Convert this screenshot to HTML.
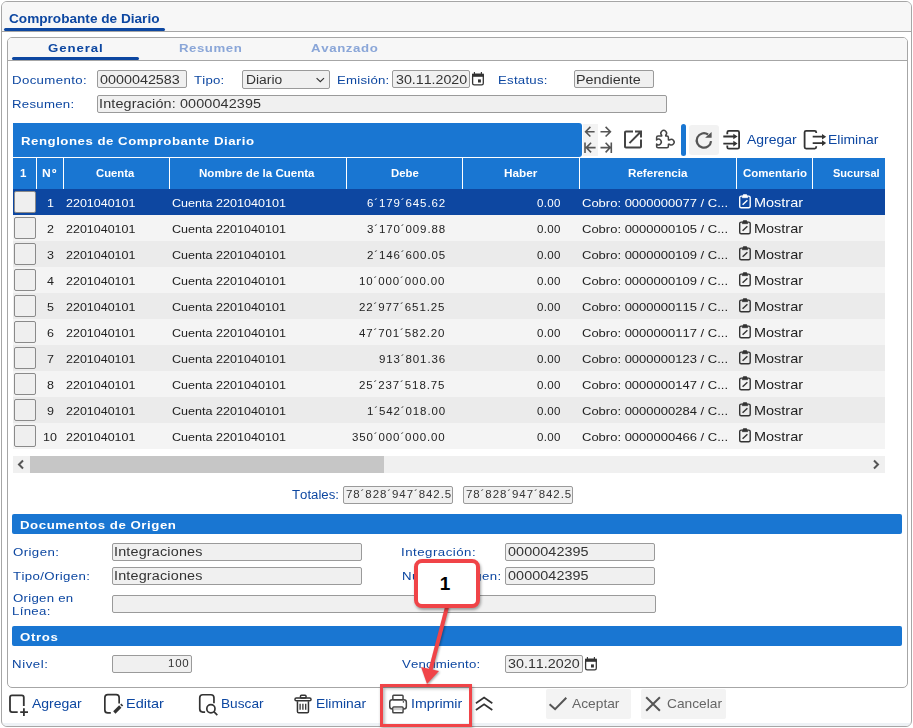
<!DOCTYPE html><html><head><meta charset="utf-8"><style>
html,body{margin:0;padding:0;background:#fff;width:913px;height:728px;overflow:hidden;position:relative}
div,svg{position:absolute}
.t{white-space:pre;transform-origin:0 0;line-height:0;font-family:"Liberation Sans",sans-serif;font-kerning:none}
</style></head><body>
<div style="left:1px;top:1px;width:911px;height:726px;border:1px solid #a6a6a6;border-radius:6px;background:#fff;box-sizing:border-box;overflow:hidden"><div style="left:0;top:0;width:909px;height:29px;background:#f7f7f7;border-bottom:1px solid #a6a6a6"></div><div style="left:0;top:721px;width:909px;height:3px;background:#eef2f6"></div></div>
<div class="t" style="left:8.74px;top:19.00px;font-size:13px;font-weight:bold;color:#0d47a1;letter-spacing:0.000px;transform:scaleX(1.047);">Comprobante de Diario</div>
<div style="left:4px;top:28px;width:161px;height:3px;background:#0d47a1;border-radius:2px"></div>
<div style="left:7px;top:37px;width:901px;height:651px;border:1px solid #a6a6a6;border-radius:5px;background:#fff;box-sizing:border-box;overflow:hidden"><div style="left:0;top:0;width:899px;height:22px;background:#f7f7f7;border-bottom:1px solid #a6a6a6"></div></div>
<div class="t" style="left:48.06px;top:48.00px;font-size:11.5px;font-weight:bold;color:#0d47a1;letter-spacing:0.801px;transform:scaleX(1.150);">General</div>
<div style="left:12px;top:57px;width:127px;height:3px;background:#0d47a1;border-radius:2px"></div>
<div class="t" style="left:178.72px;top:48.00px;font-size:11.5px;font-weight:bold;color:#8aa6d8;letter-spacing:0.460px;transform:scaleX(1.150);">Resumen</div>
<div class="t" style="left:311.37px;top:48.00px;font-size:11.5px;font-weight:bold;color:#8aa6d8;letter-spacing:0.544px;transform:scaleX(1.150);">Avanzado</div>
<div class="t" style="left:12.42px;top:80.00px;font-size:11.5px;font-weight:normal;color:#0d47a1;letter-spacing:0.318px;transform:scaleX(1.150);">Documento:</div>
<div style="left:97px;top:70px;width:90px;height:18px;border:1px solid #9a9a9a;border-radius:2px;background:#f0f0f0;box-sizing:border-box"></div>
<div class="t" style="left:100.14px;top:80.00px;font-size:12.5px;font-weight:normal;color:#333;letter-spacing:0.000px;transform:scaleX(1.148);">0000042583</div>
<div class="t" style="left:194.30px;top:80.00px;font-size:11.5px;font-weight:normal;color:#0d47a1;letter-spacing:0.175px;transform:scaleX(1.150);">Tipo:</div>
<div style="left:242px;top:70px;width:88px;height:19px;border:1px solid #9a9a9a;border-radius:2px;background:#f0f0f0;box-sizing:border-box"></div>
<div class="t" style="left:246.36px;top:80.00px;font-size:12.5px;font-weight:normal;color:#333;letter-spacing:0.000px;transform:scaleX(1.109);">Diario</div>
<svg style="left:314px;top:75px" width="13" height="9" viewBox="314 75 13 9" fill="none" stroke="#333" stroke-width="1.2"><path d="M316.6 78.1L320.3 81.7 324 78.1"/></svg>
<div class="t" style="left:337.22px;top:80.00px;font-size:11.5px;font-weight:normal;color:#0d47a1;letter-spacing:0.196px;transform:scaleX(1.150);">Emisión:</div>
<div style="left:392px;top:70px;width:78px;height:18px;border:1px solid #9a9a9a;border-radius:2px;background:#f0f0f0;box-sizing:border-box"></div>
<div class="t" style="left:395.66px;top:80.00px;font-size:12.5px;font-weight:normal;color:#333;letter-spacing:-0.000px;transform:scaleX(1.138);">30.11.2020</div>
<svg style="left:471px;top:71px" width="15" height="16" viewBox="471 71 15 16" fill="none" stroke="#333" stroke-width="1.8"><rect x="472.6" y="74.3" width="10.7" height="10.5" rx="1.6" stroke-width="1.3"/><rect x="472" y="73.7" width="11.9" height="3.1" fill="#333" stroke="none"/><path d="M474.4 72v2.5M481.4 72v2.5" stroke-width="1.1"/><rect x="478" y="79.4" width="2.9" height="3.1" fill="#333" stroke="none"/></svg>
<div class="t" style="left:497.62px;top:80.00px;font-size:11.5px;font-weight:normal;color:#0d47a1;letter-spacing:0.213px;transform:scaleX(1.150);">Estatus:</div>
<div style="left:574px;top:70px;width:80px;height:18px;border:1px solid #9a9a9a;border-radius:2px;background:#f0f0f0;box-sizing:border-box"></div>
<div class="t" style="left:576.32px;top:80.00px;font-size:12.5px;font-weight:normal;color:#333;letter-spacing:0.008px;transform:scaleX(1.150);">Pendiente</div>
<div class="t" style="left:12.42px;top:104.00px;font-size:11.5px;font-weight:normal;color:#0d47a1;letter-spacing:0.226px;transform:scaleX(1.150);">Resumen:</div>
<div style="left:97px;top:95px;width:570px;height:18px;border:1px solid #9a9a9a;border-radius:2px;background:#f0f0f0;box-sizing:border-box"></div>
<div class="t" style="left:99.07px;top:104.00px;font-size:12.5px;font-weight:normal;color:#333;letter-spacing:0.121px;transform:scaleX(1.150);">Integración: 0000042395</div>
<div style="left:13px;top:123px;width:569px;height:34px;background:#1976d2;border-radius:0 3px 3px 0"></div>
<div class="t" style="left:20.92px;top:141.00px;font-size:11.5px;font-weight:bold;color:#fff;letter-spacing:0.449px;transform:scaleX(1.150);">Renglones de Comprobante Diario</div>
<div style="left:583px;top:124px;width:15px;height:32px;background:#f3f3f3"></div>
<svg style="left:580px;top:122px" width="36" height="36" viewBox="580 122 36 36" fill="none" stroke="#555" stroke-width="1.6"><path d="M594.6 131.7H585.6M590.4 126.9L585.6 131.7 590.4 136.5"/><path d="M600.5 131.7H610.4M605.6 126.9L610.4 131.7 605.6 136.5"/><path d="M585 142.4V152.9M595.6 147.6H586.2M591.1 142.8L586.3 147.6 591.1 152.4"/><path d="M611.3 142.4V152.9M600.5 147.6H610.1M605.6 142.8L610.2 147.6 605.6 152.4"/></svg>
<svg style="left:620px;top:126px" width="26" height="26" viewBox="620 126 26 26" fill="#444" stroke="none"><path transform="translate(621 127.6)" d="M19 19H5V5h7V3H5c-1.11 0-2 .9-2 2v14c0 1.1.89 2 2 2h14c1.1 0 2-.9 2-2v-7h-2v7zM14 3v2h3.59l-9.83 9.83 1.41 1.41L19 6.41V10h2V3h-7z"/></svg>
<svg style="left:650px;top:125px" width="30" height="28" viewBox="650 125 30 28" fill="none" stroke="#444" stroke-width="1.5" stroke-linejoin="round"><path d="M656.6 139.9V137.5Q656.6 136 658.1 136H661.7V135.2A2.8 2.8 0 1 1 665.7 135.2V136H666.9Q668.4 136 668.4 137.5V139.9H669.6A2.8 2.8 0 1 1 669.6 144.3H668.4V146.2Q668.4 147.7 666.9 147.7H658.1Q656.6 147.7 656.6 146.2V144.1A2.8 2.8 0 1 0 656.6 139.9Z"/></svg>
<div style="left:681px;top:124px;width:5px;height:32px;background:#1976d2;border-radius:3px"></div>
<div style="left:689px;top:125px;width:30px;height:30px;background:#f2f2f2;border-radius:3px"></div>
<svg style="left:690px;top:126px" width="28" height="28" viewBox="690 126 28 28" ><path d="M708.03 134.5A7.2 7.2 0 1 0 711.07 141.03" fill="none" stroke="#555" stroke-width="2.2"/><path d="M711.6 132.1V137.7H705.1Z" fill="#555"/></svg>
<svg style="left:720px;top:126px" width="24" height="28" viewBox="720 126 24 28" fill="none" stroke="#333" stroke-width="1.8"><path d="M727.3 134.2V132.4Q727.3 130.9 728.8 130.9H737.6Q739.1 130.9 739.1 132.4V147.2Q739.1 148.7 737.6 148.7H728.8Q727.3 148.7 727.3 147.2V145.4"/><path d="M723.3 136.5H734M723.3 143.6H734"/><path d="M733.3 133.7L737.6 136.5 733.3 139.3ZM733.3 140.8L737.6 143.6 733.3 146.4Z" fill="#333" stroke="none"/></svg>
<div class="t" style="left:747.47px;top:140.00px;font-size:13px;font-weight:normal;color:#0d47a1;letter-spacing:0.000px;transform:scaleX(1.074);">Agregar</div>
<svg style="left:800px;top:126px" width="30" height="28" viewBox="800 126 30 28" fill="none" stroke="#333" stroke-width="1.8"><path d="M816.2 132.9V132.3Q816.2 130.8 814.7 130.8H806.1Q804.6 130.8 804.6 132.3V147.1Q804.6 148.6 806.1 148.6H814.7Q816.2 148.6 816.2 147.1V146.3"/><path d="M812.7 136.7H823M812.7 143.1H823"/><path d="M822 133.9L826.2 136.7 822 139.5ZM822 140.3L826.2 143.1 822 145.9Z" fill="#333" stroke="none"/></svg>
<div class="t" style="left:828.26px;top:140.00px;font-size:13px;font-weight:normal;color:#0d47a1;letter-spacing:-0.000px;transform:scaleX(1.071);">Eliminar</div>
<div style="left:13px;top:158px;width:872px;height:31px;background:#1976d2"></div>
<div style="left:36px;top:158px;width:1px;height:31px;background:#fff"></div>
<div style="left:63px;top:158px;width:1px;height:31px;background:#fff"></div>
<div style="left:169px;top:158px;width:1px;height:31px;background:#fff"></div>
<div style="left:346px;top:158px;width:1px;height:31px;background:#fff"></div>
<div style="left:462px;top:158px;width:1px;height:31px;background:#fff"></div>
<div style="left:579px;top:158px;width:1px;height:31px;background:#fff"></div>
<div style="left:736px;top:158px;width:1px;height:31px;background:#fff"></div>
<div style="left:812px;top:158px;width:1px;height:31px;background:#fff"></div>
<div class="t" style="left:19.87px;top:173.00px;font-size:10.5px;font-weight:bold;color:#fff;letter-spacing:0.000px;transform:scaleX(1.100);">1</div>
<div class="t" style="left:42.39px;top:173.00px;font-size:10.5px;font-weight:bold;color:#fff;letter-spacing:1.116px;transform:scaleX(1.150);">Nº</div>
<div class="t" style="left:96.44px;top:173.00px;font-size:10.5px;font-weight:bold;color:#fff;letter-spacing:0.000px;transform:scaleX(1.073);">Cuenta</div>
<div class="t" style="left:199.43px;top:173.00px;font-size:10.5px;font-weight:bold;color:#fff;letter-spacing:0.000px;transform:scaleX(1.100);">Nombre de la Cuenta</div>
<div class="t" style="left:390.64px;top:173.00px;font-size:10.5px;font-weight:bold;color:#fff;letter-spacing:0.000px;transform:scaleX(1.081);">Debe</div>
<div class="t" style="left:504.01px;top:173.00px;font-size:10.5px;font-weight:bold;color:#fff;letter-spacing:0.000px;transform:scaleX(1.121);">Haber</div>
<div class="t" style="left:627.72px;top:173.00px;font-size:10.5px;font-weight:bold;color:#fff;letter-spacing:0.000px;transform:scaleX(1.108);">Referencia</div>
<div class="t" style="left:742.53px;top:173.00px;font-size:10.5px;font-weight:bold;color:#fff;letter-spacing:0.000px;transform:scaleX(1.096);">Comentario</div>
<div class="t" style="left:832.68px;top:173.00px;font-size:10.5px;font-weight:bold;color:#fff;letter-spacing:0.000px;transform:scaleX(1.051);">Sucursal</div>
<div style="left:13px;top:189px;width:872px;height:26px;background:#0d47a1"></div>
<div style="left:14px;top:191px;width:22px;height:22px;border:1px solid #8a8a8a;border-radius:2px;background:#efefef;box-sizing:border-box"></div>
<div class="t" style="left:46.91px;top:203.00px;font-size:11.3px;font-weight:normal;color:#fff;letter-spacing:0.000px;transform:scaleX(1.105);">1</div>
<div class="t" style="left:65.87px;top:203.00px;font-size:11.3px;font-weight:normal;color:#fff;letter-spacing:0.000px;transform:scaleX(1.105);">2201040101</div>
<div class="t" style="left:172.36px;top:203.00px;font-size:11.3px;font-weight:normal;color:#fff;letter-spacing:0.000px;transform:scaleX(1.113);">Cuenta 2201040101</div>
<div class="t" style="left:366.74px;top:204.00px;font-size:10px;font-weight:normal;color:#fff;letter-spacing:0.769px;transform:scaleX(1.150);">6´179´645.62</div>
<div class="t" style="left:537.15px;top:204.00px;font-size:10px;font-weight:normal;color:#fff;letter-spacing:0.324px;transform:scaleX(1.150);">0.00</div>
<div class="t" style="left:581.74px;top:203.00px;font-size:11.3px;font-weight:normal;color:#fff;letter-spacing:0.004px;transform:scaleX(1.150);">Cobro: 0000000077 / C...</div>
<svg style="left:736px;top:192px" width="18" height="19" viewBox="736 192 18 19" fill="none" stroke="#fff"><rect x="739.7" y="196.1" width="10.5" height="11.6" rx="1.5" fill="none" stroke-width="1.4"/><path d="M742.2 197.7L743.4 194.6H746.6L747.8 197.7Z" fill="#fff" stroke-width="0.6"/><path d="M742.6 204.8L747.4 200.3" stroke-width="1.5"/></svg>
<div class="t" style="left:754.01px;top:203.00px;font-size:13px;font-weight:normal;color:#fff;letter-spacing:0.000px;transform:scaleX(1.113);">Mostrar</div>
<div style="left:13px;top:215px;width:872px;height:26px;background:#f4f4f4"></div>
<div style="left:14px;top:217px;width:22px;height:22px;border:1px solid #8a8a8a;border-radius:2px;background:#efefef;box-sizing:border-box"></div>
<div class="t" style="left:47.08px;top:229.00px;font-size:11.3px;font-weight:normal;color:#222;letter-spacing:0.000px;transform:scaleX(1.105);">2</div>
<div class="t" style="left:65.87px;top:229.00px;font-size:11.3px;font-weight:normal;color:#222;letter-spacing:0.000px;transform:scaleX(1.105);">2201040101</div>
<div class="t" style="left:172.36px;top:229.00px;font-size:11.3px;font-weight:normal;color:#222;letter-spacing:0.000px;transform:scaleX(1.113);">Cuenta 2201040101</div>
<div class="t" style="left:366.66px;top:230.00px;font-size:10px;font-weight:normal;color:#222;letter-spacing:0.769px;transform:scaleX(1.150);">3´170´009.88</div>
<div class="t" style="left:537.15px;top:230.00px;font-size:10px;font-weight:normal;color:#222;letter-spacing:0.324px;transform:scaleX(1.150);">0.00</div>
<div class="t" style="left:581.74px;top:229.00px;font-size:11.3px;font-weight:normal;color:#222;letter-spacing:0.004px;transform:scaleX(1.150);">Cobro: 0000000105 / C...</div>
<svg style="left:736px;top:218px" width="18" height="19" viewBox="736 218 18 19" fill="none" stroke="#333"><rect x="739.7" y="222.1" width="10.5" height="11.6" rx="1.5" fill="none" stroke-width="1.4"/><path d="M742.2 223.7L743.4 220.6H746.6L747.8 223.7Z" fill="#333" stroke-width="0.6"/><path d="M742.6 230.8L747.4 226.3" stroke-width="1.5"/></svg>
<div class="t" style="left:754.01px;top:229.00px;font-size:13px;font-weight:normal;color:#222;letter-spacing:0.000px;transform:scaleX(1.113);">Mostrar</div>
<div style="left:13px;top:241px;width:872px;height:26px;background:#ebebeb"></div>
<div style="left:14px;top:243px;width:22px;height:22px;border:1px solid #8a8a8a;border-radius:2px;background:#efefef;box-sizing:border-box"></div>
<div class="t" style="left:47.11px;top:255.00px;font-size:11.3px;font-weight:normal;color:#222;letter-spacing:0.000px;transform:scaleX(1.105);">3</div>
<div class="t" style="left:65.87px;top:255.00px;font-size:11.3px;font-weight:normal;color:#222;letter-spacing:0.000px;transform:scaleX(1.105);">2201040101</div>
<div class="t" style="left:172.36px;top:255.00px;font-size:11.3px;font-weight:normal;color:#222;letter-spacing:0.000px;transform:scaleX(1.113);">Cuenta 2201040101</div>
<div class="t" style="left:366.65px;top:256.00px;font-size:10px;font-weight:normal;color:#222;letter-spacing:0.769px;transform:scaleX(1.150);">2´146´600.05</div>
<div class="t" style="left:537.15px;top:256.00px;font-size:10px;font-weight:normal;color:#222;letter-spacing:0.324px;transform:scaleX(1.150);">0.00</div>
<div class="t" style="left:581.74px;top:255.00px;font-size:11.3px;font-weight:normal;color:#222;letter-spacing:0.004px;transform:scaleX(1.150);">Cobro: 0000000109 / C...</div>
<svg style="left:736px;top:244px" width="18" height="19" viewBox="736 244 18 19" fill="none" stroke="#333"><rect x="739.7" y="248.1" width="10.5" height="11.6" rx="1.5" fill="none" stroke-width="1.4"/><path d="M742.2 249.7L743.4 246.6H746.6L747.8 249.7Z" fill="#333" stroke-width="0.6"/><path d="M742.6 256.8L747.4 252.3" stroke-width="1.5"/></svg>
<div class="t" style="left:754.01px;top:255.00px;font-size:13px;font-weight:normal;color:#222;letter-spacing:0.000px;transform:scaleX(1.113);">Mostrar</div>
<div style="left:13px;top:267px;width:872px;height:26px;background:#f4f4f4"></div>
<div style="left:14px;top:269px;width:22px;height:22px;border:1px solid #8a8a8a;border-radius:2px;background:#efefef;box-sizing:border-box"></div>
<div class="t" style="left:47.12px;top:281.00px;font-size:11.3px;font-weight:normal;color:#222;letter-spacing:0.000px;transform:scaleX(1.105);">4</div>
<div class="t" style="left:65.87px;top:281.00px;font-size:11.3px;font-weight:normal;color:#222;letter-spacing:0.000px;transform:scaleX(1.105);">2201040101</div>
<div class="t" style="left:172.36px;top:281.00px;font-size:11.3px;font-weight:normal;color:#222;letter-spacing:0.000px;transform:scaleX(1.113);">Cuenta 2201040101</div>
<div class="t" style="left:359.33px;top:282.00px;font-size:10px;font-weight:normal;color:#222;letter-spacing:0.769px;transform:scaleX(1.150);">10´000´000.00</div>
<div class="t" style="left:537.15px;top:282.00px;font-size:10px;font-weight:normal;color:#222;letter-spacing:0.324px;transform:scaleX(1.150);">0.00</div>
<div class="t" style="left:581.74px;top:281.00px;font-size:11.3px;font-weight:normal;color:#222;letter-spacing:0.004px;transform:scaleX(1.150);">Cobro: 0000000109 / C...</div>
<svg style="left:736px;top:270px" width="18" height="19" viewBox="736 270 18 19" fill="none" stroke="#333"><rect x="739.7" y="274.1" width="10.5" height="11.6" rx="1.5" fill="none" stroke-width="1.4"/><path d="M742.2 275.7L743.4 272.6H746.6L747.8 275.7Z" fill="#333" stroke-width="0.6"/><path d="M742.6 282.8L747.4 278.3" stroke-width="1.5"/></svg>
<div class="t" style="left:754.01px;top:281.00px;font-size:13px;font-weight:normal;color:#222;letter-spacing:0.000px;transform:scaleX(1.113);">Mostrar</div>
<div style="left:13px;top:293px;width:872px;height:26px;background:#ebebeb"></div>
<div style="left:14px;top:295px;width:22px;height:22px;border:1px solid #8a8a8a;border-radius:2px;background:#efefef;box-sizing:border-box"></div>
<div class="t" style="left:47.09px;top:307.00px;font-size:11.3px;font-weight:normal;color:#222;letter-spacing:0.000px;transform:scaleX(1.105);">5</div>
<div class="t" style="left:65.87px;top:307.00px;font-size:11.3px;font-weight:normal;color:#222;letter-spacing:0.000px;transform:scaleX(1.105);">2201040101</div>
<div class="t" style="left:172.36px;top:307.00px;font-size:11.3px;font-weight:normal;color:#222;letter-spacing:0.000px;transform:scaleX(1.113);">Cuenta 2201040101</div>
<div class="t" style="left:359.37px;top:308.00px;font-size:10px;font-weight:normal;color:#222;letter-spacing:0.769px;transform:scaleX(1.150);">22´977´651.25</div>
<div class="t" style="left:537.15px;top:308.00px;font-size:10px;font-weight:normal;color:#222;letter-spacing:0.324px;transform:scaleX(1.150);">0.00</div>
<div class="t" style="left:581.74px;top:307.00px;font-size:11.3px;font-weight:normal;color:#222;letter-spacing:0.004px;transform:scaleX(1.150);">Cobro: 0000000115 / C...</div>
<svg style="left:736px;top:296px" width="18" height="19" viewBox="736 296 18 19" fill="none" stroke="#333"><rect x="739.7" y="300.1" width="10.5" height="11.6" rx="1.5" fill="none" stroke-width="1.4"/><path d="M742.2 301.7L743.4 298.6H746.6L747.8 301.7Z" fill="#333" stroke-width="0.6"/><path d="M742.6 308.8L747.4 304.3" stroke-width="1.5"/></svg>
<div class="t" style="left:754.01px;top:307.00px;font-size:13px;font-weight:normal;color:#222;letter-spacing:0.000px;transform:scaleX(1.113);">Mostrar</div>
<div style="left:13px;top:319px;width:872px;height:26px;background:#f4f4f4"></div>
<div style="left:14px;top:321px;width:22px;height:22px;border:1px solid #8a8a8a;border-radius:2px;background:#efefef;box-sizing:border-box"></div>
<div class="t" style="left:47.04px;top:333.00px;font-size:11.3px;font-weight:normal;color:#222;letter-spacing:0.000px;transform:scaleX(1.105);">6</div>
<div class="t" style="left:65.87px;top:333.00px;font-size:11.3px;font-weight:normal;color:#222;letter-spacing:0.000px;transform:scaleX(1.105);">2201040101</div>
<div class="t" style="left:172.36px;top:333.00px;font-size:11.3px;font-weight:normal;color:#222;letter-spacing:0.000px;transform:scaleX(1.113);">Cuenta 2201040101</div>
<div class="t" style="left:359.33px;top:334.00px;font-size:10px;font-weight:normal;color:#222;letter-spacing:0.769px;transform:scaleX(1.150);">47´701´582.20</div>
<div class="t" style="left:537.15px;top:334.00px;font-size:10px;font-weight:normal;color:#222;letter-spacing:0.324px;transform:scaleX(1.150);">0.00</div>
<div class="t" style="left:581.74px;top:333.00px;font-size:11.3px;font-weight:normal;color:#222;letter-spacing:0.004px;transform:scaleX(1.150);">Cobro: 0000000117 / C...</div>
<svg style="left:736px;top:322px" width="18" height="19" viewBox="736 322 18 19" fill="none" stroke="#333"><rect x="739.7" y="326.1" width="10.5" height="11.6" rx="1.5" fill="none" stroke-width="1.4"/><path d="M742.2 327.7L743.4 324.6H746.6L747.8 327.7Z" fill="#333" stroke-width="0.6"/><path d="M742.6 334.8L747.4 330.3" stroke-width="1.5"/></svg>
<div class="t" style="left:754.01px;top:333.00px;font-size:13px;font-weight:normal;color:#222;letter-spacing:0.000px;transform:scaleX(1.113);">Mostrar</div>
<div style="left:13px;top:345px;width:872px;height:26px;background:#ebebeb"></div>
<div style="left:14px;top:347px;width:22px;height:22px;border:1px solid #8a8a8a;border-radius:2px;background:#efefef;box-sizing:border-box"></div>
<div class="t" style="left:47.07px;top:359.00px;font-size:11.3px;font-weight:normal;color:#222;letter-spacing:0.000px;transform:scaleX(1.105);">7</div>
<div class="t" style="left:65.87px;top:359.00px;font-size:11.3px;font-weight:normal;color:#222;letter-spacing:0.000px;transform:scaleX(1.105);">2201040101</div>
<div class="t" style="left:172.36px;top:359.00px;font-size:11.3px;font-weight:normal;color:#222;letter-spacing:0.000px;transform:scaleX(1.113);">Cuenta 2201040101</div>
<div class="t" style="left:378.66px;top:360.00px;font-size:10px;font-weight:normal;color:#222;letter-spacing:0.769px;transform:scaleX(1.150);">913´801.36</div>
<div class="t" style="left:537.15px;top:360.00px;font-size:10px;font-weight:normal;color:#222;letter-spacing:0.324px;transform:scaleX(1.150);">0.00</div>
<div class="t" style="left:581.74px;top:359.00px;font-size:11.3px;font-weight:normal;color:#222;letter-spacing:0.004px;transform:scaleX(1.150);">Cobro: 0000000123 / C...</div>
<svg style="left:736px;top:348px" width="18" height="19" viewBox="736 348 18 19" fill="none" stroke="#333"><rect x="739.7" y="352.1" width="10.5" height="11.6" rx="1.5" fill="none" stroke-width="1.4"/><path d="M742.2 353.7L743.4 350.6H746.6L747.8 353.7Z" fill="#333" stroke-width="0.6"/><path d="M742.6 360.8L747.4 356.3" stroke-width="1.5"/></svg>
<div class="t" style="left:754.01px;top:359.00px;font-size:13px;font-weight:normal;color:#222;letter-spacing:0.000px;transform:scaleX(1.113);">Mostrar</div>
<div style="left:13px;top:371px;width:872px;height:26px;background:#f4f4f4"></div>
<div style="left:14px;top:373px;width:22px;height:22px;border:1px solid #8a8a8a;border-radius:2px;background:#efefef;box-sizing:border-box"></div>
<div class="t" style="left:47.08px;top:385.00px;font-size:11.3px;font-weight:normal;color:#222;letter-spacing:0.000px;transform:scaleX(1.105);">8</div>
<div class="t" style="left:65.87px;top:385.00px;font-size:11.3px;font-weight:normal;color:#222;letter-spacing:0.000px;transform:scaleX(1.105);">2201040101</div>
<div class="t" style="left:172.36px;top:385.00px;font-size:11.3px;font-weight:normal;color:#222;letter-spacing:0.000px;transform:scaleX(1.113);">Cuenta 2201040101</div>
<div class="t" style="left:359.37px;top:386.00px;font-size:10px;font-weight:normal;color:#222;letter-spacing:0.769px;transform:scaleX(1.150);">25´237´518.75</div>
<div class="t" style="left:537.15px;top:386.00px;font-size:10px;font-weight:normal;color:#222;letter-spacing:0.324px;transform:scaleX(1.150);">0.00</div>
<div class="t" style="left:581.74px;top:385.00px;font-size:11.3px;font-weight:normal;color:#222;letter-spacing:0.004px;transform:scaleX(1.150);">Cobro: 0000000147 / C...</div>
<svg style="left:736px;top:374px" width="18" height="19" viewBox="736 374 18 19" fill="none" stroke="#333"><rect x="739.7" y="378.1" width="10.5" height="11.6" rx="1.5" fill="none" stroke-width="1.4"/><path d="M742.2 379.7L743.4 376.6H746.6L747.8 379.7Z" fill="#333" stroke-width="0.6"/><path d="M742.6 386.8L747.4 382.3" stroke-width="1.5"/></svg>
<div class="t" style="left:754.01px;top:385.00px;font-size:13px;font-weight:normal;color:#222;letter-spacing:0.000px;transform:scaleX(1.113);">Mostrar</div>
<div style="left:13px;top:397px;width:872px;height:26px;background:#ebebeb"></div>
<div style="left:14px;top:399px;width:22px;height:22px;border:1px solid #8a8a8a;border-radius:2px;background:#efefef;box-sizing:border-box"></div>
<div class="t" style="left:47.08px;top:411.00px;font-size:11.3px;font-weight:normal;color:#222;letter-spacing:0.000px;transform:scaleX(1.105);">9</div>
<div class="t" style="left:65.87px;top:411.00px;font-size:11.3px;font-weight:normal;color:#222;letter-spacing:0.000px;transform:scaleX(1.105);">2201040101</div>
<div class="t" style="left:172.36px;top:411.00px;font-size:11.3px;font-weight:normal;color:#222;letter-spacing:0.000px;transform:scaleX(1.113);">Cuenta 2201040101</div>
<div class="t" style="left:366.61px;top:412.00px;font-size:10px;font-weight:normal;color:#222;letter-spacing:0.769px;transform:scaleX(1.150);">1´542´018.00</div>
<div class="t" style="left:537.15px;top:412.00px;font-size:10px;font-weight:normal;color:#222;letter-spacing:0.324px;transform:scaleX(1.150);">0.00</div>
<div class="t" style="left:581.74px;top:411.00px;font-size:11.3px;font-weight:normal;color:#222;letter-spacing:0.004px;transform:scaleX(1.150);">Cobro: 0000000284 / C...</div>
<svg style="left:736px;top:400px" width="18" height="19" viewBox="736 400 18 19" fill="none" stroke="#333"><rect x="739.7" y="404.1" width="10.5" height="11.6" rx="1.5" fill="none" stroke-width="1.4"/><path d="M742.2 405.7L743.4 402.6H746.6L747.8 405.7Z" fill="#333" stroke-width="0.6"/><path d="M742.6 412.8L747.4 408.3" stroke-width="1.5"/></svg>
<div class="t" style="left:754.01px;top:411.00px;font-size:13px;font-weight:normal;color:#222;letter-spacing:0.000px;transform:scaleX(1.113);">Mostrar</div>
<div style="left:13px;top:423px;width:872px;height:26px;background:#f4f4f4"></div>
<div style="left:14px;top:425px;width:22px;height:22px;border:1px solid #8a8a8a;border-radius:2px;background:#efefef;box-sizing:border-box"></div>
<div class="t" style="left:43.37px;top:437.00px;font-size:11.3px;font-weight:normal;color:#222;letter-spacing:0.000px;transform:scaleX(1.105);">10</div>
<div class="t" style="left:65.87px;top:437.00px;font-size:11.3px;font-weight:normal;color:#222;letter-spacing:0.000px;transform:scaleX(1.105);">2201040101</div>
<div class="t" style="left:172.36px;top:437.00px;font-size:11.3px;font-weight:normal;color:#222;letter-spacing:0.000px;transform:scaleX(1.113);">Cuenta 2201040101</div>
<div class="t" style="left:352.05px;top:438.00px;font-size:10px;font-weight:normal;color:#222;letter-spacing:0.769px;transform:scaleX(1.150);">350´000´000.00</div>
<div class="t" style="left:537.15px;top:438.00px;font-size:10px;font-weight:normal;color:#222;letter-spacing:0.324px;transform:scaleX(1.150);">0.00</div>
<div class="t" style="left:581.74px;top:437.00px;font-size:11.3px;font-weight:normal;color:#222;letter-spacing:0.004px;transform:scaleX(1.150);">Cobro: 0000000466 / C...</div>
<svg style="left:736px;top:426px" width="18" height="19" viewBox="736 426 18 19" fill="none" stroke="#333"><rect x="739.7" y="430.1" width="10.5" height="11.6" rx="1.5" fill="none" stroke-width="1.4"/><path d="M742.2 431.7L743.4 428.6H746.6L747.8 431.7Z" fill="#333" stroke-width="0.6"/><path d="M742.6 438.8L747.4 434.3" stroke-width="1.5"/></svg>
<div class="t" style="left:754.01px;top:437.00px;font-size:13px;font-weight:normal;color:#222;letter-spacing:0.000px;transform:scaleX(1.113);">Mostrar</div>
<div style="left:13px;top:456px;width:872px;height:17px;background:#f0f0f0"></div>
<div style="left:30px;top:456px;width:354px;height:17px;background:#c6c6c6"></div>
<svg style="left:16px;top:459px" width="10" height="11" viewBox="0 0 10 11"><path d="M7 1.5L3 5.5 7 9.5" fill="none" stroke="#555" stroke-width="2"/></svg>
<svg style="left:871px;top:459px" width="10" height="11" viewBox="0 0 10 11"><path d="M3 1.5L7 5.5 3 9.5" fill="none" stroke="#555" stroke-width="2"/></svg>
<div class="t" style="left:292.00px;top:495.00px;font-size:12px;font-weight:normal;color:#0d47a1;letter-spacing:-0.000px;transform:scaleX(1.101);">Totales:</div>
<div style="left:343px;top:486px;width:110px;height:18px;border:1px solid #9a9a9a;border-radius:2px;background:#f0f0f0;box-sizing:border-box"></div>
<div style="left:463px;top:486px;width:110px;height:18px;border:1px solid #9a9a9a;border-radius:2px;background:#f0f0f0;box-sizing:border-box"></div>
<div class="t" style="left:345.61px;top:495.00px;font-size:10px;font-weight:normal;color:#333;letter-spacing:0.797px;transform:scaleX(1.150);">78´828´947´842.5</div>
<div class="t" style="left:465.81px;top:495.00px;font-size:10px;font-weight:normal;color:#333;letter-spacing:0.797px;transform:scaleX(1.150);">78´828´947´842.5</div>
<div style="left:12px;top:514px;width:890px;height:20px;background:#1976d2;border-radius:2px"></div>
<div class="t" style="left:19.92px;top:525.00px;font-size:11.5px;font-weight:bold;color:#fff;letter-spacing:0.476px;transform:scaleX(1.150);">Documentos de Origen</div>
<div class="t" style="left:12.67px;top:552.00px;font-size:11.5px;font-weight:normal;color:#0d47a1;letter-spacing:0.357px;transform:scaleX(1.150);">Origen:</div>
<div style="left:112px;top:543px;width:250px;height:18px;border:1px solid #9a9a9a;border-radius:2px;background:#f0f0f0;box-sizing:border-box"></div>
<div class="t" style="left:113.57px;top:552.00px;font-size:12.5px;font-weight:normal;color:#333;letter-spacing:0.155px;transform:scaleX(1.150);">Integraciones</div>
<div class="t" style="left:13.00px;top:576.00px;font-size:11.5px;font-weight:normal;color:#0d47a1;letter-spacing:0.335px;transform:scaleX(1.150);">Tipo/Origen:</div>
<div style="left:112px;top:567px;width:250px;height:18px;border:1px solid #9a9a9a;border-radius:2px;background:#f0f0f0;box-sizing:border-box"></div>
<div class="t" style="left:113.57px;top:576.00px;font-size:12.5px;font-weight:normal;color:#333;letter-spacing:0.155px;transform:scaleX(1.150);">Integraciones</div>
<div class="t" style="left:12.67px;top:598.00px;font-size:11.5px;font-weight:normal;color:#0d47a1;letter-spacing:0.229px;transform:scaleX(1.150);">Origen en</div>
<div class="t" style="left:12.22px;top:611.00px;font-size:11.5px;font-weight:normal;color:#0d47a1;letter-spacing:0.282px;transform:scaleX(1.150);">Línea:</div>
<div style="left:112px;top:595px;width:544px;height:18px;border:1px solid #9a9a9a;border-radius:2px;background:#f0f0f0;box-sizing:border-box"></div>
<div class="t" style="left:401.38px;top:552.00px;font-size:11.5px;font-weight:normal;color:#0d47a1;letter-spacing:0.436px;transform:scaleX(1.150);">Integración:</div>
<div style="left:505px;top:543px;width:150px;height:18px;border:1px solid #9a9a9a;border-radius:2px;background:#f0f0f0;box-sizing:border-box"></div>
<div class="t" style="left:507.74px;top:552.00px;font-size:12.5px;font-weight:normal;color:#333;letter-spacing:0.060px;transform:scaleX(1.150);">0000042395</div>
<div class="t" style="left:401.52px;top:576.00px;font-size:11.5px;font-weight:normal;color:#0d47a1;letter-spacing:0.335px;transform:scaleX(1.150);">Número/Origen:</div>
<div style="left:505px;top:567px;width:150px;height:18px;border:1px solid #9a9a9a;border-radius:2px;background:#f0f0f0;box-sizing:border-box"></div>
<div class="t" style="left:507.74px;top:576.00px;font-size:12.5px;font-weight:normal;color:#333;letter-spacing:0.060px;transform:scaleX(1.150);">0000042395</div>
<div style="left:12px;top:626px;width:890px;height:20px;background:#1976d2;border-radius:2px"></div>
<div class="t" style="left:19.76px;top:637.00px;font-size:11.5px;font-weight:bold;color:#fff;letter-spacing:0.568px;transform:scaleX(1.150);">Otros</div>
<div class="t" style="left:12.22px;top:664.00px;font-size:11.5px;font-weight:normal;color:#0d47a1;letter-spacing:0.508px;transform:scaleX(1.150);">Nivel:</div>
<div style="left:112px;top:655px;width:80px;height:18px;border:1px solid #9a9a9a;border-radius:2px;background:#f0f0f0;box-sizing:border-box"></div>
<div class="t" style="left:168.32px;top:664.00px;font-size:10px;font-weight:normal;color:#333;letter-spacing:0.669px;transform:scaleX(1.150);">100</div>
<div class="t" style="left:402.14px;top:664.00px;font-size:11.5px;font-weight:normal;color:#0d47a1;letter-spacing:0.128px;transform:scaleX(1.150);">Vencimiento:</div>
<div style="left:505px;top:655px;width:78px;height:18px;border:1px solid #9a9a9a;border-radius:2px;background:#f0f0f0;box-sizing:border-box"></div>
<div class="t" style="left:508.46px;top:664.00px;font-size:12.5px;font-weight:normal;color:#333;letter-spacing:0.000px;transform:scaleX(1.145);">30.11.2020</div>
<svg style="left:584px;top:656.2px" width="15" height="16.0" viewBox="584 656.2 15 16.0" fill="none" stroke="#333" stroke-width="1.8"><rect x="585.6" y="659.5" width="10.7" height="10.5" rx="1.6" stroke-width="1.3"/><rect x="585" y="658.9000000000001" width="11.9" height="3.1" fill="#333" stroke="none"/><path d="M587.4 657.2v2.5M594.4 657.2v2.5" stroke-width="1.1"/><rect x="591" y="664.6" width="2.9" height="3.1" fill="#333" stroke="none"/></svg>
<svg style="left:6px;top:692px" width="24" height="26" viewBox="6 692 24 26" fill="none" stroke="#333" stroke-width="1.8"><path d="M23.8 706V697.3Q23.8 695.3 21.8 695.3H12Q10 695.3 10 697.3V710.1Q10 712.1 12 712.1H17.7M20.2 712.1H28M23.9 708.3V715.9"/></svg>
<div class="t" style="left:32.27px;top:704.00px;font-size:13px;font-weight:normal;color:#0d47a1;letter-spacing:0.000px;transform:scaleX(1.076);">Agregar</div>
<svg style="left:101px;top:691px" width="24" height="26" viewBox="101 691 24 26" fill="none" stroke="#333" stroke-width="1.8"><path d="M119.15 703.5V697.65Q119.15 694.65 116.15 694.65H107.85Q104.85 694.65 104.85 697.65V709.95Q104.85 712.95 107.85 712.95H110.8" stroke-width="1.7"/><path d="M114.3 712.5L120.3 706.5" stroke-width="3.2"/><path d="M121.1 705.7L122.3 704.5" stroke-width="2.6"/></svg>
<div class="t" style="left:126.21px;top:704.00px;font-size:13px;font-weight:normal;color:#0d47a1;letter-spacing:0.000px;transform:scaleX(1.114);">Editar</div>
<svg style="left:196px;top:691px" width="24" height="27" viewBox="196 691 24 27" fill="none" stroke="#333" stroke-width="1.7"><path d="M213.95 703.2V697.75Q213.95 694.75 210.95 694.75H202.75Q199.75 694.75 199.75 697.75V709.05Q199.75 712.05 202.75 712.05H205.1"/><circle cx="210.9" cy="708.7" r="4.1"/><path d="M213.9 711.7L217.3 715.1"/></svg>
<div class="t" style="left:221.08px;top:704.00px;font-size:13px;font-weight:normal;color:#0d47a1;letter-spacing:0.000px;transform:scaleX(1.052);">Buscar</div>
<svg style="left:291px;top:692px" width="24" height="24" viewBox="291 692 24 24" fill="none" stroke="#333" stroke-width="1.5"><rect x="294.95" y="698.05" width="16.1" height="2.8" rx="1.4"/><rect x="300.45" y="695.15" width="5.6" height="2.9" rx="1"/><path d="M297.45 701.3V711.5Q297.45 712.75 298.7 712.75H307.2Q308.45 712.75 308.45 711.5V701.3"/><path d="M300.1 703.8V709.7M302.9 703.8V709.7M305.7 703.8V709.7" stroke-width="1.3"/></svg>
<div class="t" style="left:315.86px;top:704.00px;font-size:13px;font-weight:normal;color:#0d47a1;letter-spacing:0.000px;transform:scaleX(1.066);">Eliminar</div>
<svg style="left:386px;top:692px" width="24" height="24" viewBox="386 692 24 24" fill="none" stroke="#444" stroke-width="1.5"><rect x="392.85" y="695.35" width="10.2" height="4.5" rx="0.8"/><rect x="389.75" y="699.75" width="16.6" height="9.3" rx="2.5"/><rect x="392.85" y="706.95" width="10.2" height="5.8" rx="0.8" fill="#fff"/><rect x="393.7" y="707.8" width="8.5" height="2.4" fill="#d0d0d0" stroke="none"/><circle cx="403.4" cy="701.9" r="0.8" fill="#444" stroke="none"/></svg>
<div class="t" style="left:411.49px;top:704.00px;font-size:13px;font-weight:normal;color:#0d47a1;letter-spacing:0.000px;transform:scaleX(1.092);">Imprimir</div>
<svg style="left:472px;top:694px" width="24" height="20" viewBox="472 694 24 20" fill="none" stroke="#333" stroke-width="1.7"><path d="M475.9 703.3L484.1 697.6 492.3 703.3M475.9 710L484.1 704.3 492.3 710"/></svg>
<div style="left:546px;top:689px;width:85px;height:30px;background:#f3f3f3;border-radius:2px"></div>
<svg style="left:547px;top:694px" width="22" height="18" viewBox="547 694 22 18" fill="none" stroke="#555" stroke-width="2"><path d="M549.6 704.2L555.1 709.2 566.3 697.7"/></svg>
<div class="t" style="left:571.97px;top:704.00px;font-size:13px;font-weight:normal;color:#666;letter-spacing:0.000px;transform:scaleX(1.059);">Aceptar</div>
<div style="left:641px;top:689px;width:85px;height:30px;background:#f3f3f3;border-radius:2px"></div>
<svg style="left:643px;top:694px" width="20" height="20" viewBox="643 694 20 20" fill="none" stroke="#555" stroke-width="2"><path d="M646.2 697.2L659.9 710.8M659.9 697.2L646.2 710.8"/></svg>
<div class="t" style="left:666.80px;top:704.00px;font-size:13px;font-weight:normal;color:#666;letter-spacing:0.000px;transform:scaleX(1.058);">Cancelar</div>
<div style="left:380px;top:684px;width:92px;height:43px;border:3.5px solid #f04448;box-sizing:border-box;box-shadow:1px 2px 3px rgba(0,0,0,0.3), inset 2px 2px 3px rgba(0,0,0,0.25)"></div>
<svg style="left:0;top:0;filter:drop-shadow(1px 1px 1.2px rgba(0,0,0,0.35))" width="913" height="728"><path d="M447 607L430 672" stroke="#f04448" stroke-width="4"/><path d="M421 667L427 684 439 671z" fill="#f04448"/></svg>
<div style="left:414px;top:559px;width:66px;height:49px;border:4px solid #f04448;border-radius:8px;background:#fff;box-sizing:border-box;box-shadow:1px 2px 3px rgba(0,0,0,0.35)"></div>
<div class="t" style="left:439.70px;top:584.00px;font-size:19px;font-weight:bold;color:#000;letter-spacing:0.000px;">1</div>
</body></html>
